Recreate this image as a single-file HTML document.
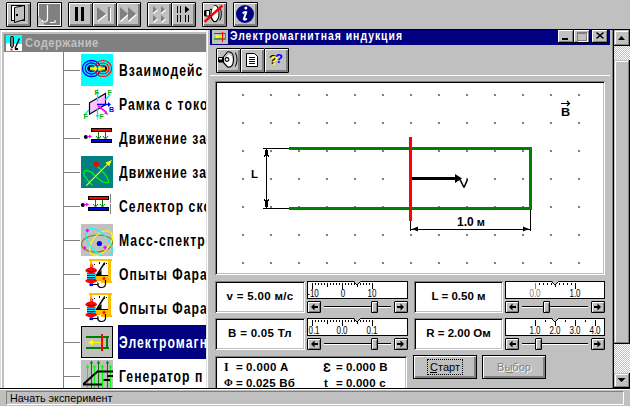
<!DOCTYPE html>
<html><head><meta charset="utf-8"><style>
html,body{margin:0;padding:0}
body{width:630px;height:406px;background:#c0c0c0;position:relative;overflow:hidden;font-family:"Liberation Sans",sans-serif}
.a{position:absolute}
svg{position:absolute;overflow:visible}
.tb{position:absolute;width:25px;height:25px;box-sizing:border-box;background:#c0c0c0;
 clip-path:polygon(1px 0,calc(100% - 1px) 0,100% 1px,100% calc(100% - 1px),calc(100% - 1px) 100%,1px 100%,0 calc(100% - 1px),0 1px);
 box-shadow:inset 1px 1px #000,inset -1px -1px #000,inset 2px 2px #fff,inset -3px -3px #808080}
.t{position:absolute;white-space:pre;line-height:1}
.sunk{position:absolute;background:#fff;box-shadow:inset 1px 1px #808080,inset -1px -1px #fff,inset 2px 2px #000,inset -2px -2px #c0c0c0}
.cb{position:absolute;width:16px;height:13px;box-sizing:border-box;background:#c0c0c0;
 box-shadow:inset -1px -1px #000,inset 1px 1px #fff,inset -2px -2px #808080}
.sb{position:absolute;box-sizing:border-box;background:#c0c0c0;
 box-shadow:inset -1px -1px #000,inset 1px 1px #c0c0c0,inset -2px -2px #808080,inset 2px 2px #fff}
.chk{background-color:#fff;background-image:linear-gradient(45deg,#c0c0c0 25%,transparent 25%,transparent 75%,#c0c0c0 75%),linear-gradient(45deg,#c0c0c0 25%,transparent 25%,transparent 75%,#c0c0c0 75%);background-size:2px 2px;background-position:0 0,1px 1px}
.sbt{position:absolute;height:12px;box-sizing:border-box;background:#c0c0c0;
 clip-path:polygon(1px 0,calc(100% - 1px) 0,100% 1px,100% calc(100% - 1px),calc(100% - 1px) 100%,1px 100%,0 calc(100% - 1px),0 1px);
 box-shadow:inset 1px 1px #000,inset -1px -1px #000,inset 2px 2px #fff,inset -2px -2px #808080}
.sl{font-size:10px;letter-spacing:0px}
</style></head><body>
<div class="tb" style="left:6px;top:2px;background:#c0c0c0"></div>
<div class="tb" style="left:37px;top:2px;background:#808080"></div>
<div class="tb" style="left:68px;top:2px;background:#c0c0c0"></div>
<div class="tb" style="left:92px;top:2px;background:#c0c0c0"></div>
<div class="tb" style="left:116px;top:2px;background:#c0c0c0"></div>
<div class="tb" style="left:147px;top:2px;background:#c0c0c0"></div>
<div class="tb" style="left:171px;top:2px;background:#c0c0c0"></div>
<div class="tb" style="left:202px;top:2px;background:#c0c0c0"></div>
<div class="tb" style="left:233px;top:2px;background:#c0c0c0"></div>
<div class="a" style="left:0px;top:29px;width:630px;height:1px;background:#000;"></div>
<div class="a" style="left:0px;top:30px;width:1px;height:358px;background:#dfdfdf;"></div>
<div class="a" style="left:1px;top:30px;width:205px;height:2px;background:#fff;"></div>
<div class="a" style="left:1px;top:30px;width:1px;height:358px;background:#fff;"></div>
<div class="a" style="left:4px;top:34px;width:202px;height:18px;background:#808080;"></div>
<div class="t" style="left:24.5px;top:36.5px;font-size:12.5px;font-weight:bold;color:#c0c0c0;letter-spacing:0.5px;transform:scaleX(0.9);transform-origin:0 0">Содержание</div>
<div class="a" style="left:4px;top:52px;width:202px;height:336px;background:#fff;"></div>
<div class="a" style="left:63px;top:52px;width:1px;height:336px;background:#808080;"></div>
<div class="a" style="left:4px;top:52px;width:202px;height:336px;overflow:hidden">
<div class="a" style="left:60px;top:18px;width:16px;height:1px;background:#808080"></div>
<div class="t" style="left:114.5px;top:10.5px;font-size:16px;font-weight:bold;letter-spacing:1.4px;transform:scaleX(0.76);transform-origin:0 0;color:#000">Взаимодейс</div>
<div class="a" style="left:60px;top:52px;width:16px;height:1px;background:#808080"></div>
<div class="t" style="left:114.5px;top:44.5px;font-size:16px;font-weight:bold;letter-spacing:1.4px;transform:scaleX(0.76);transform-origin:0 0;color:#000">Рамка с токо</div>
<div class="a" style="left:60px;top:86px;width:16px;height:1px;background:#808080"></div>
<div class="t" style="left:114.5px;top:78.5px;font-size:16px;font-weight:bold;letter-spacing:1.4px;transform:scaleX(0.76);transform-origin:0 0;color:#000">Движение за</div>
<div class="a" style="left:60px;top:120px;width:16px;height:1px;background:#808080"></div>
<div class="t" style="left:114.5px;top:112.5px;font-size:16px;font-weight:bold;letter-spacing:1.4px;transform:scaleX(0.76);transform-origin:0 0;color:#000">Движение за</div>
<div class="a" style="left:60px;top:154px;width:16px;height:1px;background:#808080"></div>
<div class="t" style="left:114.5px;top:146.5px;font-size:16px;font-weight:bold;letter-spacing:1.4px;transform:scaleX(0.76);transform-origin:0 0;color:#000">Селектор ско</div>
<div class="a" style="left:60px;top:188px;width:16px;height:1px;background:#808080"></div>
<div class="t" style="left:114.5px;top:180.5px;font-size:16px;font-weight:bold;letter-spacing:1.4px;transform:scaleX(0.76);transform-origin:0 0;color:#000">Масс-спектр</div>
<div class="a" style="left:60px;top:222px;width:16px;height:1px;background:#808080"></div>
<div class="t" style="left:114.5px;top:214.5px;font-size:16px;font-weight:bold;letter-spacing:1.4px;transform:scaleX(0.76);transform-origin:0 0;color:#000">Опыты Фара</div>
<div class="a" style="left:60px;top:256px;width:16px;height:1px;background:#808080"></div>
<div class="t" style="left:114.5px;top:248.5px;font-size:16px;font-weight:bold;letter-spacing:1.4px;transform:scaleX(0.76);transform-origin:0 0;color:#000">Опыты Фара</div>
<div class="a" style="left:60px;top:290px;width:16px;height:1px;background:#808080"></div>
<div class="a" style="left:114px;top:273px;width:100px;height:34px;background:#000080"></div>
<div class="t" style="left:114.5px;top:282.5px;font-size:16px;font-weight:bold;letter-spacing:1.4px;transform:scaleX(0.76);transform-origin:0 0;color:#fff">Электромагн</div>
<div class="a" style="left:60px;top:324px;width:16px;height:1px;background:#808080"></div>
<div class="t" style="left:114.5px;top:316.5px;font-size:16px;font-weight:bold;letter-spacing:1.4px;transform:scaleX(0.76);transform-origin:0 0;color:#000">Генератор п</div>
</div>
<svg width="32" height="32" style="left:81px;top:54px">
<rect width="32" height="32" fill="#00ffff"/>
<g fill="none" stroke-width="1.3">
<ellipse cx="10.5" cy="14.5" rx="9" ry="8" stroke="#0000ff"/><ellipse cx="10.5" cy="14.5" rx="6.3" ry="5.5" stroke="#0000ff"/><ellipse cx="10.5" cy="14.5" rx="3.7" ry="3.2" stroke="#0000ff"/>
<ellipse cx="22" cy="14.5" rx="8.5" ry="8" stroke="#ff0000" stroke-width="1.2"/><ellipse cx="22" cy="14.5" rx="6" ry="5.5" stroke="#ff0000" stroke-width="1.2"/><ellipse cx="22" cy="14.5" rx="3.5" ry="3.2" stroke="#ff0000" stroke-width="1.2"/>
</g>
<ellipse cx="9.5" cy="14.5" rx="3" ry="2.2" fill="#000"/><ellipse cx="23" cy="14.5" rx="3" ry="2.2" fill="#000"/>
<path d="M9 13.2h4.5v-2l3 3.3l-3 3.3v-2h-4.5z M24 13.2h-4.5v-2l-3 3.3l3 3.3v-2h4.5z" fill="#ffff00"/>
</svg>
<svg width="32" height="32" style="left:81px;top:88px">
<rect x="16" y="1" width="1" height="31" fill="#ffb0ff"/>
<path d="M8.5 14.8L24.5 5.5V16.6L8.5 26.3z" fill="#ffc0ff" stroke="#000" stroke-width="1.2"/>
<rect x="16" y="1" width="1" height="31" fill="#ffb0ff" opacity="0.6"/>
<path d="M16.5 13V4 M16.5 20V29 M24 12L29.5 6.5 M8 22L3 27" stroke="#00e0ff" stroke-width="1.3"/>
<path d="M14.5 6h4l-2 -3z M14.5 27h4l-2 3z" fill="#00e0ff"/>
<path d="M16 16.5H28" stroke="#0000ff" stroke-width="1.5"/><path d="M27 14l3 2.5l-3 2.5z" fill="#0000ff"/>
<path d="M17 18L25 24" stroke="#ff00ff" stroke-width="1.8"/><path d="M23 25.5l4 1.5l-1.5-4z" fill="#ff00ff"/>
<g font-family="Liberation Sans" font-weight="bold" font-size="7" fill="#00b000">
<text x="13.5" y="7">F</text><text x="26.5" y="7">F</text><text x="2.5" y="31">F</text><text x="18.5" y="31">F</text></g>
<text x="28" y="24" font-family="Liberation Sans" font-weight="bold" font-size="7" fill="#0000ff">B</text>
</svg>
<svg width="32" height="32" style="left:81px;top:122px" shape-rendering="crispEdges">
<rect x="10" y="6" width="21" height="4" fill="#000"/><rect x="11" y="7" width="19" height="2" fill="#ff0000"/>
<rect x="10" y="17" width="21" height="4" fill="#000"/><rect x="11" y="18" width="19" height="2" fill="#0000ff"/>
<rect x="17" y="10" width="1" height="6" fill="#008000"/><rect x="24" y="10" width="1" height="6" fill="#008000"/>
<path d="M15 14l2.5 3l2.5-3 M22 14l2.5 3l2.5-3" stroke="#008000" fill="none" shape-rendering="auto"/>
<circle cx="4.8" cy="15" r="2" fill="#000" shape-rendering="auto"/>
<rect x="6" y="14" width="4" height="1" fill="#ff00ff"/><path d="M8 12.5l3 2l-3 2z" fill="#ff00ff" shape-rendering="auto"/>
</svg>
<svg width="32" height="32" style="left:81px;top:156px;overflow:hidden">
<rect width="32" height="32" fill="#008080"/>
<path d="M17 10.7L24 18.3Q27.5 23 27.5 26.5Q25.5 27.5 21.6 25.8L15.8 21.6L11.6 17Q7 14 3.5 14.8Q2 17 3.2 19.5L7.4 25L11.6 29.6" fill="none" stroke="#00ff00" stroke-width="1.2"/>
<path d="M5.3 29.6L30.4 4.4" stroke="#ffff00" stroke-width="1.1"/><path d="M30.4 4.4l-6 2.2l3.8 3.8z" fill="#ffff00"/>
<circle cx="15.3" cy="8.2" r="2.6" fill="#ff0000"/>
</svg>
<svg width="32" height="32" style="left:78px;top:190px" shape-rendering="crispEdges">
<rect x="10" y="6" width="21" height="4" fill="#000"/><rect x="11" y="7" width="19" height="2" fill="#ff0000"/>
<rect x="10" y="17" width="21" height="4" fill="#000"/><rect x="11" y="18" width="19" height="2" fill="#0000ff"/>
<rect x="17" y="10" width="1" height="6" fill="#008000"/><rect x="24" y="10" width="1" height="6" fill="#008000"/>
<path d="M15 14l2.5 3l2.5-3 M22 14l2.5 3l2.5-3" stroke="#008000" fill="none" shape-rendering="auto"/>
<circle cx="4.8" cy="15" r="2" fill="#000" shape-rendering="auto"/>
<rect x="6" y="14" width="4" height="1" fill="#ff00ff"/><path d="M8 12.5l3 2l-3 2z" fill="#ff00ff" shape-rendering="auto"/>
<rect x="32" y="4" width="1" height="9" fill="#808080"/><rect x="32" y="14" width="1" height="10" fill="#808080"/></svg>
<svg width="32" height="32" style="left:81px;top:224px;overflow:hidden">
<rect width="32" height="32" fill="#c0c0c0"/>
<ellipse cx="16" cy="19.5" rx="15.5" ry="8.5" transform="rotate(-4 16 19.5)" fill="none" stroke="#808000" stroke-width="1.1"/>
<ellipse cx="20" cy="19" rx="14.5" ry="8.5" transform="rotate(-49 20 19)" fill="none" stroke="#ffff00" stroke-width="1.1"/>
<ellipse cx="18" cy="18.5" rx="17" ry="9" transform="rotate(48 18 18.5)" fill="none" stroke="#00ffff" stroke-width="1.1"/>
<circle cx="18.4" cy="19.5" r="2.6" fill="#0000ff"/>
<path d="M6.4 4.5l2 2l-2 2l-2-2z M3.5 22l2 2l-2 2l-2-2z M24 21.5l2 2l-2 2l-2-2z" fill="#ff00ff"/>
</svg>
<svg width="32" height="32" style="left:82px;top:256px">
<g shape-rendering="crispEdges">
<rect x="7" y="3" width="23" height="2" fill="#ffbf00"/>
<rect x="8" y="5" width="2" height="15" fill="#ffbf00"/>
<rect x="26" y="5" width="3" height="22" fill="#ffbf00"/>
<rect x="10" y="5" width="16" height="14" fill="#fff"/>
<rect x="12" y="20" width="14" height="5" fill="#ffbf00"/>
<rect x="19" y="25" width="11" height="2" fill="#ffbf00"/>
<rect x="14" y="19" width="12" height="1" fill="#000"/>
<rect x="12" y="8" width="1" height="1" fill="#000"/><rect x="17" y="6" width="1" height="2" fill="#000"/><rect x="22" y="8" width="1" height="1" fill="#000"/><rect x="24" y="7" width="1" height="1" fill="#000"/>
</g>
<path d="M14.5 19.5L22.8 6.5" stroke="#000" stroke-width="1.4"/>
<path d="M14 20L19.5 14V20z" fill="#000"/>
<rect x="8.4" y="8.4" width="2.8" height="3.5" rx="1" fill="#ff0000"/><rect x="9.3" y="9.3" width="1" height="1.5" fill="#fff"/>
<ellipse cx="9.2" cy="14.4" rx="5.8" ry="2.8" fill="#ff0000"/>
<path d="M6 15q3.2 2 6.4 0" stroke="#000" fill="none" stroke-width="0.9"/>
<rect x="5" y="17.2" width="8.4" height="7" fill="#0000ff"/>
<path d="M5 18.3h8.4 M5 20.5h8.4 M5 22.7h8.4" stroke="#00ffff" stroke-width="1.1"/>
<ellipse cx="9.2" cy="24.8" rx="5.8" ry="2.3" fill="#ff0000"/>
<rect x="7.5" y="27.3" width="3.5" height="2.8" fill="#0000ff"/>
<path d="M12 27.5h3.5" stroke="#fff" stroke-width="2"/>
<path d="M11 28.5h4.5q1 3 3.5 3q4.5 0 4.5-3.5v-4" stroke="#000" fill="none" stroke-width="1.2"/>
<path d="M15.5 26.5l1 2" stroke="#000" stroke-width="1.1"/>
<path d="M22 20.5l1.7 2l-1.7 2l-1.7-2z" fill="#ff0000"/>
</svg>
<svg width="32" height="32" style="left:82px;top:290px">
<g shape-rendering="crispEdges">
<rect x="7" y="3" width="23" height="2" fill="#ffbf00"/>
<rect x="8" y="5" width="2" height="15" fill="#ffbf00"/>
<rect x="26" y="5" width="3" height="22" fill="#ffbf00"/>
<rect x="10" y="5" width="16" height="14" fill="#fff"/>
<rect x="12" y="20" width="14" height="5" fill="#ffbf00"/>
<rect x="19" y="25" width="11" height="2" fill="#ffbf00"/>
<rect x="14" y="19" width="12" height="1" fill="#000"/>
<rect x="12" y="8" width="1" height="1" fill="#000"/><rect x="17" y="6" width="1" height="2" fill="#000"/><rect x="22" y="8" width="1" height="1" fill="#000"/><rect x="24" y="7" width="1" height="1" fill="#000"/>
</g>
<path d="M14.5 19.5L22.8 6.5" stroke="#000" stroke-width="1.4"/>
<path d="M14 20L19.5 14V20z" fill="#000"/>
<rect x="8.4" y="8.4" width="2.8" height="3.5" rx="1" fill="#ff0000"/><rect x="9.3" y="9.3" width="1" height="1.5" fill="#fff"/>
<ellipse cx="9.2" cy="14.4" rx="5.8" ry="2.8" fill="#ff0000"/>
<path d="M6 15q3.2 2 6.4 0" stroke="#000" fill="none" stroke-width="0.9"/>
<rect x="5" y="17.2" width="8.4" height="7" fill="#0000ff"/>
<path d="M5 18.3h8.4 M5 20.5h8.4 M5 22.7h8.4" stroke="#00ffff" stroke-width="1.1"/>
<ellipse cx="9.2" cy="24.8" rx="5.8" ry="2.3" fill="#ff0000"/>
<rect x="7.5" y="27.3" width="3.5" height="2.8" fill="#0000ff"/>
<path d="M12 27.5h3.5" stroke="#fff" stroke-width="2"/>
<path d="M11 28.5h4.5q1 3 3.5 3q4.5 0 4.5-3.5v-4" stroke="#000" fill="none" stroke-width="1.2"/>
<path d="M15.5 26.5l1 2" stroke="#000" stroke-width="1.1"/>
<path d="M22 20.5l1.7 2l-1.7 2l-1.7-2z" fill="#ff0000"/>
</svg>
<svg width="32" height="32" style="left:81px;top:326px" shape-rendering="crispEdges">
<rect width="32" height="32" fill="#000"/><rect x="1" y="1" width="30" height="30" fill="#c0c0c0"/>
<rect x="5" y="10" width="23" height="2" fill="#008000"/><rect x="5" y="21" width="23" height="2" fill="#008000"/>
<rect x="25" y="10" width="2" height="13" fill="#008000"/>
<rect x="20" y="8" width="2" height="17" fill="#ff0000"/>
<rect x="10" y="16" width="10" height="1" fill="#ffff00"/>
<path d="M7 16.5l5-3v6z" fill="#ffff00" shape-rendering="auto"/>
</svg>
<svg width="32" height="28" style="left:81px;top:360px"><rect width="32" height="28" fill="#c0c0c0"/><path d="M10.5 2V28" stroke="#008000" stroke-width="1.1"/><path d="M8.7 3.5l1.8-3l1.8 3z" fill="#008000"/><path d="M17.5 2V28" stroke="#008000" stroke-width="1.1"/><path d="M15.7 3.5l1.8-3l1.8 3z" fill="#008000"/><path d="M26.5 2V28" stroke="#008000" stroke-width="1.1"/><path d="M24.7 3.5l1.8-3l1.8 3z" fill="#008000"/><path d="M6.5 6V28" stroke="#00ff00" stroke-width="1.1"/><path d="M4.7 7.5l1.8-3l1.8 3z" fill="#00ff00"/><path d="M13.5 6V28" stroke="#00ff00" stroke-width="1.1"/><path d="M11.7 7.5l1.8-3l1.8 3z" fill="#00ff00"/><path d="M21.5 6V28" stroke="#00ff00" stroke-width="1.1"/><path d="M19.7 7.5l1.8-3l1.8 3z" fill="#00ff00"/><path d="M29.5 6V28" stroke="#00ff00" stroke-width="1.1"/><path d="M27.7 7.5l1.8-3l1.8 3z" fill="#00ff00"/><path d="M2 24.5H21 M2.5 24L16.5 11.5H32 M22.5 20H29 M26.5 16H32" stroke="#000" stroke-width="1.8" fill="none"/></svg>
<div class="a" style="left:206px;top:30px;width:1px;height:358px;background:#dfdfdf;"></div>
<div class="a" style="left:207px;top:30px;width:1px;height:358px;background:#fff;"></div>
<div class="a" style="left:208px;top:30px;width:402px;height:358px;background:#c0c0c0;"></div>
<div class="a" style="left:612px;top:30px;width:1px;height:358px;background:#808080;"></div>
<div class="a" style="left:613px;top:30px;width:1px;height:358px;background:#000;"></div>
<div class="a" style="left:210px;top:30px;width:400px;height:15px;background:#000080;"></div>
<div class="t" style="left:229.5px;top:28.5px;font-size:13px;font-weight:bold;color:#fff;letter-spacing:1.25px;transform:scaleX(0.8);transform-origin:0 0">Электромагнитная индукция</div>
<div class="cb" style="left:558px;top:30px"></div>
<div class="cb" style="left:574px;top:30px"></div>
<div class="cb" style="left:592px;top:30px"></div>
<div class="tb" style="left:216px;top:48px;background:#c0c0c0"></div>
<div class="tb" style="left:240px;top:48px;background:#c0c0c0"></div>
<div class="tb" style="left:264px;top:48px;background:#c0c0c0"></div>
<div class="a" style="left:210px;top:75px;width:400px;height:1px;background:#fff;"></div>
<div class="sunk" style="left:215px;top:81px;width:390px;height:194px"></div>
<svg width="630" height="406" style="left:0;top:0" shape-rendering="crispEdges">
<path d="M242 94h2v2h-2zM242 122h2v2h-2zM242 150h2v2h-2zM242 178h2v2h-2zM242 206h2v2h-2zM242 234h2v2h-2zM242 262h2v2h-2zM270 94h2v2h-2zM270 122h2v2h-2zM270 150h2v2h-2zM270 178h2v2h-2zM270 206h2v2h-2zM270 234h2v2h-2zM270 262h2v2h-2zM298 94h2v2h-2zM298 122h2v2h-2zM298 150h2v2h-2zM298 178h2v2h-2zM298 206h2v2h-2zM298 234h2v2h-2zM298 262h2v2h-2zM326 94h2v2h-2zM326 122h2v2h-2zM326 150h2v2h-2zM326 178h2v2h-2zM326 206h2v2h-2zM326 234h2v2h-2zM326 262h2v2h-2zM354 94h2v2h-2zM354 122h2v2h-2zM354 150h2v2h-2zM354 178h2v2h-2zM354 206h2v2h-2zM354 234h2v2h-2zM354 262h2v2h-2zM382 94h2v2h-2zM382 122h2v2h-2zM382 150h2v2h-2zM382 178h2v2h-2zM382 206h2v2h-2zM382 234h2v2h-2zM382 262h2v2h-2zM410 94h2v2h-2zM410 122h2v2h-2zM410 150h2v2h-2zM410 178h2v2h-2zM410 206h2v2h-2zM410 234h2v2h-2zM410 262h2v2h-2zM438 94h2v2h-2zM438 122h2v2h-2zM438 150h2v2h-2zM438 178h2v2h-2zM438 206h2v2h-2zM438 234h2v2h-2zM438 262h2v2h-2zM466 94h2v2h-2zM466 122h2v2h-2zM466 150h2v2h-2zM466 178h2v2h-2zM466 206h2v2h-2zM466 234h2v2h-2zM466 262h2v2h-2zM494 94h2v2h-2zM494 122h2v2h-2zM494 150h2v2h-2zM494 178h2v2h-2zM494 206h2v2h-2zM494 234h2v2h-2zM494 262h2v2h-2zM522 94h2v2h-2zM522 122h2v2h-2zM522 150h2v2h-2zM522 178h2v2h-2zM522 206h2v2h-2zM522 234h2v2h-2zM522 262h2v2h-2zM550 94h2v2h-2zM550 122h2v2h-2zM550 150h2v2h-2zM550 178h2v2h-2zM550 206h2v2h-2zM550 234h2v2h-2zM550 262h2v2h-2zM578 94h2v2h-2zM578 122h2v2h-2zM578 150h2v2h-2zM578 178h2v2h-2zM578 206h2v2h-2zM578 234h2v2h-2zM578 262h2v2h-2z" fill="#808080"/>
<rect x="263" y="148" width="26" height="1" fill="#000"/>
<rect x="263" y="208" width="26" height="1" fill="#000"/>
<rect x="289" y="147" width="243" height="3" fill="#008000"/>
<rect x="289" y="207" width="243" height="3" fill="#008000"/>
<rect x="529" y="147" width="3" height="63" fill="#008000"/>
<rect x="266" y="149" width="1" height="59" fill="#000"/>
<path d="M265 150h3v6h-3z M264 155h1v2h-1z M268 155h1v2h-1z M265 200h3v7h-3z M264 199h1v2h-1z M268 199h1v2h-1z" fill="#000"/>
<rect x="409" y="137" width="3" height="84" fill="#ff0000"/>
<rect x="412" y="177" width="44" height="3" fill="#000"/>
<path d="M455 174l7 4.5l-7 4.5z" fill="#000" shape-rendering="auto"/>
<path d="M460 179.5l4 8 M464 187.5l3.5-8" stroke="#000" stroke-width="1.6" fill="none" shape-rendering="auto"/>
<rect x="410" y="221" width="1" height="10" fill="#000"/>
<rect x="530" y="210" width="1" height="21" fill="#000"/>
<rect x="411" y="229" width="119" height="1" fill="#000"/>
<path d="M412 229l6-2.5v5z M529 229l-6-2.5v5z" fill="#000" shape-rendering="auto"/>
<rect x="561" y="103" width="9" height="1" fill="#000"/>
<path d="M567 101l2.5 2.5l-2.5 2.5" stroke="#000" stroke-width="1.2" fill="none" shape-rendering="auto"/>
</svg>
<div class="t" style="left:251px;top:169px;font-size:11.5px;font-weight:bold;color:#000;">L</div>
<div class="t" style="left:561px;top:107px;font-size:11px;font-weight:bold;color:#000;transform:scaleX(1.15);transform-origin:0 0">B</div>
<div class="t" style="left:457px;top:216px;font-size:12px;font-weight:bold;color:#000;">1.0<span style="font-size:11px"> м</span></div>
<div class="sunk" style="left:215px;top:281px;width:90px;height:32px"></div>
<div class="sunk" style="left:215px;top:318px;width:90px;height:32px"></div>
<div class="sunk" style="left:414px;top:281px;width:89px;height:32px"></div>
<div class="sunk" style="left:414px;top:318px;width:89px;height:32px"></div>
<div class="sunk" style="left:215px;top:356px;width:192px;height:40px"></div>
<div class="a" style="left:307px;top:281px;width:101px;height:18px;box-sizing:border-box;border:1px solid #000;background:#fff"></div>
<svg width="630" height="406" style="left:0;top:0" shape-rendering="crispEdges"><path d="M312 283h1v6h-1zM315 283h1v2h-1zM318 283h1v2h-1zM321 283h1v2h-1zM324 283h1v2h-1zM327 283h1v4h-1zM330 283h1v2h-1zM333 283h1v2h-1zM336 283h1v2h-1zM339 283h1v2h-1zM342 283h1v6h-1zM345 283h1v2h-1zM348 283h1v2h-1zM351 283h1v2h-1zM354 283h1v2h-1zM357 283h1v4h-1zM360 283h1v2h-1zM363 283h1v2h-1zM366 283h1v2h-1zM369 283h1v2h-1zM372 283h1v6h-1z" fill="#000"/><path d="M354 281h7l-3.5 3.5z" fill="#c0c0c0" shape-rendering="auto"/><path d="M353.5 281.5l3.5 3.5l3.5-3.5" stroke="#000" stroke-width="1" fill="none" shape-rendering="auto"/><rect x="357" y="284" width="1" height="3" fill="#000"/><rect x="324" y="306" width="67" height="1" fill="#000"/><rect x="324" y="307" width="67" height="1" fill="#fff"/></svg>
<div class="t sl" style="left:313px;top:288.8px;color:#000;transform:translateX(-50%) scaleX(0.8)">-10</div>
<div class="t sl" style="left:343px;top:288.8px;color:#000;transform:translateX(-50%) scaleX(0.8)">0</div>
<div class="t sl" style="left:372px;top:288.8px;color:#000;transform:translateX(-50%) scaleX(0.8)">10</div>
<div class="sbt" style="left:307px;top:301px;width:14px"></div>
<div class="sbt" style="left:394px;top:301px;width:14px"></div>
<div class="sbt" style="left:371px;top:301px;width:7px"></div>
<svg width="630" height="406" style="left:0;top:0"><path d="M311 307l3.5-3.5v2.5h3.5v2h-3.5v2.5z" fill="#000"/><path d="M404 307l-3.5-3.5v2.5h-3.5v2h3.5v2.5z" fill="#000"/></svg>
<div class="a" style="left:307px;top:318px;width:101px;height:18px;box-sizing:border-box;border:1px solid #000;background:#fff"></div>
<svg width="630" height="406" style="left:0;top:0" shape-rendering="crispEdges"><path d="M312 320h1v6h-1zM315 320h1v2h-1zM318 320h1v2h-1zM321 320h1v2h-1zM324 320h1v2h-1zM327 320h1v4h-1zM330 320h1v2h-1zM333 320h1v2h-1zM336 320h1v2h-1zM339 320h1v2h-1zM342 320h1v6h-1zM345 320h1v2h-1zM348 320h1v2h-1zM351 320h1v2h-1zM354 320h1v2h-1zM357 320h1v4h-1zM360 320h1v2h-1zM363 320h1v2h-1zM366 320h1v2h-1zM369 320h1v2h-1zM372 320h1v6h-1z" fill="#000"/><path d="M354 318h7l-3.5 3.5z" fill="#c0c0c0" shape-rendering="auto"/><path d="M353.5 318.5l3.5 3.5l3.5-3.5" stroke="#000" stroke-width="1" fill="none" shape-rendering="auto"/><rect x="357" y="321" width="1" height="3" fill="#000"/><rect x="324" y="343" width="67" height="1" fill="#000"/><rect x="324" y="344" width="67" height="1" fill="#fff"/></svg>
<div class="t sl" style="left:314px;top:325.8px;color:#000;transform:translateX(-50%) scaleX(0.8)">0.1</div>
<div class="t sl" style="left:342px;top:325.8px;color:#000;transform:translateX(-50%) scaleX(0.8)">0.0</div>
<div class="t sl" style="left:372px;top:325.8px;color:#000;transform:translateX(-50%) scaleX(0.8)">0.1</div>
<div class="sbt" style="left:307px;top:338px;width:14px"></div>
<div class="sbt" style="left:394px;top:338px;width:14px"></div>
<div class="sbt" style="left:371px;top:338px;width:7px"></div>
<svg width="630" height="406" style="left:0;top:0"><path d="M311 344l3.5-3.5v2.5h3.5v2h-3.5v2.5z" fill="#000"/><path d="M404 344l-3.5-3.5v2.5h-3.5v2h3.5v2.5z" fill="#000"/></svg>
<div class="a" style="left:505px;top:281px;width:100px;height:18px;box-sizing:border-box;border:1px solid #000;background:#fff"></div>
<svg width="630" height="406" style="left:0;top:0" shape-rendering="crispEdges"><path d="M539 283h1v2h-1zM543 283h1v2h-1zM547 283h1v2h-1zM551 283h1v2h-1zM555 283h1v4h-1zM559 283h1v2h-1zM563 283h1v2h-1zM567 283h1v2h-1zM571 283h1v2h-1zM575 283h1v6h-1z" fill="#000"/><path d="M535 283h1v6h-1z" fill="#808080"/><path d="M552 281h7l-3.5 3.5z" fill="#c0c0c0" shape-rendering="auto"/><path d="M551.5 281.5l3.5 3.5l3.5-3.5" stroke="#000" stroke-width="1" fill="none" shape-rendering="auto"/><rect x="555" y="284" width="1" height="3" fill="#000"/><rect x="522" y="306" width="66" height="1" fill="#000"/><rect x="522" y="307" width="66" height="1" fill="#fff"/></svg>
<div class="t sl" style="left:535px;top:288.8px;color:#808080;transform:translateX(-50%) scaleX(0.8)">0.0</div>
<div class="t sl" style="left:575px;top:288.8px;color:#000;transform:translateX(-50%) scaleX(0.8)">1.0</div>
<div class="sbt" style="left:505px;top:301px;width:14px"></div>
<div class="sbt" style="left:591px;top:301px;width:14px"></div>
<div class="sbt" style="left:543px;top:301px;width:7px"></div>
<svg width="630" height="406" style="left:0;top:0"><path d="M509 307l3.5-3.5v2.5h3.5v2h-3.5v2.5z" fill="#000"/><path d="M601 307l-3.5-3.5v2.5h-3.5v2h3.5v2.5z" fill="#000"/></svg>
<div class="a" style="left:505px;top:318px;width:100px;height:18px;box-sizing:border-box;border:1px solid #000;background:#fff"></div>
<svg width="630" height="406" style="left:0;top:0" shape-rendering="crispEdges"><path d="M535 320h1v6h-1zM545 320h1v2h-1zM555 320h1v6h-1zM565 320h1v2h-1zM575 320h1v6h-1zM585 320h1v2h-1zM595 320h1v6h-1z" fill="#000"/><path d="M552 318h7l-3.5 3.5z" fill="#c0c0c0" shape-rendering="auto"/><path d="M551.5 318.5l3.5 3.5l3.5-3.5" stroke="#000" stroke-width="1" fill="none" shape-rendering="auto"/><rect x="555" y="321" width="1" height="3" fill="#000"/><rect x="522" y="343" width="66" height="1" fill="#000"/><rect x="522" y="344" width="66" height="1" fill="#fff"/></svg>
<div class="t sl" style="left:535px;top:325.8px;color:#000;transform:translateX(-50%) scaleX(0.8)">1.0</div>
<div class="t sl" style="left:555px;top:325.8px;color:#000;transform:translateX(-50%) scaleX(0.8)">2.0</div>
<div class="t sl" style="left:575px;top:325.8px;color:#000;transform:translateX(-50%) scaleX(0.8)">3.0</div>
<div class="t sl" style="left:595px;top:325.8px;color:#000;transform:translateX(-50%) scaleX(0.8)">4.0</div>
<div class="sbt" style="left:505px;top:338px;width:14px"></div>
<div class="sbt" style="left:591px;top:338px;width:14px"></div>
<div class="sbt" style="left:535px;top:338px;width:7px"></div>
<svg width="630" height="406" style="left:0;top:0"><path d="M509 344l3.5-3.5v2.5h3.5v2h-3.5v2.5z" fill="#000"/><path d="M601 344l-3.5-3.5v2.5h-3.5v2h3.5v2.5z" fill="#000"/></svg>
<div class="t" style="left:215px;top:291px;width:90px;text-align:center;font-size:11.5px;font-weight:bold;letter-spacing:0.3px">v = 5.00 м/с</div>
<div class="t" style="left:215px;top:328px;width:90px;text-align:center;font-size:11.5px;font-weight:bold;letter-spacing:0.3px">B = 0.05 Тл</div>
<div class="t" style="left:414px;top:291px;width:89px;text-align:center;font-size:11.5px;font-weight:bold;letter-spacing:0px">L = 0.50 м</div>
<div class="t" style="left:414px;top:328px;width:89px;text-align:center;font-size:11.5px;font-weight:bold;letter-spacing:0px">R = 2.00 Ом</div>
<div class="a" style="left:217px;top:358px;width:188px;height:30px;overflow:hidden">
<div class="t" style="left:7px;top:3px;font-family:'Liberation Serif',sans-serif;font-size:12px;font-weight:bold;letter-spacing:0px">I</div>
<div class="t" style="left:19px;top:4px;font-family:'Liberation Sans',sans-serif;font-size:11.5px;font-weight:bold;letter-spacing:0px">=</div>
<div class="t" style="left:29px;top:4px;font-family:'Liberation Sans',sans-serif;font-size:11.5px;font-weight:bold;letter-spacing:0.4px">0.000 A</div>
<div class="t" style="left:7px;top:20px;font-family:'Liberation Serif',sans-serif;font-size:10.5px;font-weight:bold;letter-spacing:0px">Φ</div>
<div class="t" style="left:19px;top:20px;font-family:'Liberation Sans',sans-serif;font-size:11.5px;font-weight:bold;letter-spacing:0px">=</div>
<div class="t" style="left:29px;top:20px;font-family:'Liberation Sans',sans-serif;font-size:11.5px;font-weight:bold;letter-spacing:0.2px">0.025 Вб</div>
<div class="t" style="left:106px;top:4px;font-family:'Liberation Sans',sans-serif;font-size:12.5px;font-weight:bold;letter-spacing:0px">Ɛ</div>
<div class="t" style="left:119px;top:4px;font-family:'Liberation Sans',sans-serif;font-size:11.5px;font-weight:bold;letter-spacing:0px">=</div>
<div class="t" style="left:129px;top:4px;font-family:'Liberation Sans',sans-serif;font-size:11.5px;font-weight:bold;letter-spacing:0.2px">0.000 B</div>
<div class="t" style="left:107px;top:20px;font-family:'Liberation Sans',sans-serif;font-size:11.5px;font-weight:bold;letter-spacing:0px">t</div>
<div class="t" style="left:119px;top:20px;font-family:'Liberation Sans',sans-serif;font-size:11.5px;font-weight:bold;letter-spacing:0px">=</div>
<div class="t" style="left:129px;top:20px;font-family:'Liberation Sans',sans-serif;font-size:11.5px;font-weight:bold;letter-spacing:0.2px">0.000 c</div>
</div>
<div class="a" style="left:413px;top:355px;width:64px;height:24px;box-sizing:border-box;border:1px solid #000;background:#c0c0c0;box-shadow:inset 1px 1px #fff,inset -2px -2px #808080"></div>
<div class="a" style="left:427px;top:359px;width:36px;height:16px;box-sizing:border-box;border:1px dotted #000"></div>
<div class="t" style="left:413px;top:362px;width:64px;text-align:center;font-size:11px">Старт</div>
<div class="a" style="left:430px;top:372px;width:7px;height:1px;background:#000;"></div>
<div class="a" style="left:482px;top:355px;width:64px;height:24px;box-sizing:border-box;border:1px solid #000;background:#c0c0c0;box-shadow:inset 1px 1px #fff,inset -2px -2px #808080"></div>
<div class="t" style="left:483px;top:363px;width:64px;text-align:center;font-size:11px;color:#fff">Выбор</div>
<div class="t" style="left:482px;top:362px;width:64px;text-align:center;font-size:11px;color:#808080">Выбор</div>
<div class="a" style="left:506px;top:372px;width:7px;height:1px;background:#808080;"></div>
<div class="sb" style="left:614px;top:30px;width:16px;height:16px"></div>
<div class="a chk" style="left:614px;top:46px;width:16px;height:14px"></div>
<div class="sb" style="left:614px;top:60px;width:16px;height:284px"></div>
<div class="a chk" style="left:614px;top:344px;width:16px;height:29px"></div>
<div class="sb" style="left:614px;top:373px;width:16px;height:15px"></div>
<div class="a" style="left:0px;top:388px;width:630px;height:18px;background:#c0c0c0;"></div>
<div class="a" style="left:0px;top:388px;width:630px;height:1px;background:#000;"></div>
<div class="a" style="left:0px;top:389px;width:630px;height:1px;background:#fff;"></div>
<div class="a" style="left:6px;top:391px;width:618px;height:14px;background:transparent;box-sizing:border-box;border-top:1px solid #808080;border-left:1px solid #808080;border-right:1px solid #fff;border-bottom:1px solid #fff"></div>
<div class="t" style="left:10px;top:393px;font-size:10.8px;font-weight:normal;color:#000;">Начать эксперимент</div>
<div class="a" style="left:38px;top:3px;width:23px;height:23px;box-sizing:border-box;border:1px solid #fff;background:#808080"></div>
<svg width="630" height="406" style="left:0;top:0"><g shape-rendering="crispEdges"><rect x="11" y="5" width="14" height="16" fill="#000"/><rect x="12" y="6" width="12" height="14" fill="#fff"/></g><path d="M14.5 7.5L24.5 5.5V19.5L14.5 22.5z" fill="#c0c0c0" stroke="#000" stroke-width="1"/><rect x="16" y="14" width="2" height="2" fill="#000"/><path d="M38 15L45 25H38z" fill="#c0c0c0"/><path d="M47.5 5V19q0 3-3 3q-2 0-2.5-2 M50 22.5h4 M55 20v3" stroke="#fff" stroke-width="1.2" fill="none"/><g shape-rendering="crispEdges"><rect x="75" y="7" width="3" height="14" fill="#000"/><rect x="81" y="7" width="3" height="14" fill="#000"/></g><path d="M97 7L106 14L97 21z" fill="#808080"/><path d="M97.5 21.5L106.5 14.5" stroke="#fff" stroke-width="1.2"/><g shape-rendering="crispEdges"><rect x="108" y="7" width="2" height="14" fill="#808080"/><rect x="110" y="8" width="1" height="14" fill="#fff"/></g><path d="M120 7L128 14L120 21z" fill="#808080"/><path d="M120.5 21.5L128.5 14.5" stroke="#fff" stroke-width="1.2"/><path d="M128 7L136 14L128 21z" fill="#808080"/><path d="M128.5 21.5L136.5 14.5" stroke="#fff" stroke-width="1.2"/><path d="M153 6L157 9.5L153 13z" fill="#808080"/><path d="M153.5 13.5L157.5 10" stroke="#fff" stroke-width="1.2"/><path d="M153 15L157 18.5L153 22z" fill="#808080"/><path d="M153.5 22.5L157.5 19" stroke="#fff" stroke-width="1.2"/><path d="M161 6L165 9.5L161 13z" fill="#808080"/><path d="M161.5 13.5L165.5 10" stroke="#fff" stroke-width="1.2"/><path d="M161 15L165 18.5L161 22z" fill="#808080"/><path d="M161.5 22.5L165.5 19" stroke="#fff" stroke-width="1.2"/><g shape-rendering="crispEdges" fill="#000"><rect x="177" y="6" width="1" height="7"/><rect x="180" y="6" width="1" height="7"/><rect x="177" y="15" width="1" height="7"/><rect x="180" y="15" width="1" height="7"/><rect x="185" y="15" width="1" height="7"/><rect x="188" y="15" width="1" height="7"/></g><path d="M185 6L189.5 9.5L185 13z" fill="#000"/><path d="M209.5 10.5L213.5 5.5H215V21.5H213.5L209.5 16z" fill="#c0c0c0" stroke="#000" stroke-width="1"/><ellipse cx="215" cy="13.5" rx="4" ry="8.2" fill="#fff" stroke="#000" stroke-width="1.1"/><path d="M211.5 9Q212 6 214.5 6" stroke="#c0c0c0" stroke-width="2" fill="none"/><path d="M205.5 10.5h4v5.5h-4q-1 0-1-1v-3.5q0-1 1-1z" fill="#fff" stroke="#000" stroke-width="1"/><rect x="204.5" y="10.5" width="2" height="5.5" fill="#000"/><path d="M219.8 7.5Q223 13.5 219.8 20.5" stroke="#000" stroke-width="1" fill="none"/><path d="M204.5 21.8L222.4 5.5" stroke="#ff0000" stroke-width="2.4"/><circle cx="245" cy="14" r="9" fill="#000080"/><circle cx="245.8" cy="8" r="1.5" fill="#fff"/><path d="M242.8 13.5Q244.5 11.5 246.2 12.2L243.8 19Q244.3 20.5 246.8 18.5" stroke="#fff" stroke-width="2" fill="none"/><g shape-rendering="crispEdges"><rect x="6" y="35" width="16" height="16" fill="#00ffff"/><rect x="6" y="44" width="16" height="7" fill="#fff"/></g><path d="M6 44l2-1.5l2 1l2-1l2 2l3-1l3 1l2-1V45H6z" fill="#fff"/><path d="M10.5 46V38.5Q10.5 36.2 12 36.2Q13.5 36.2 13.5 38.5V46L12 48z" fill="#808080" stroke="#000" stroke-width="0.9"/><path d="M19.5 38.5L15 48.5" stroke="#000" stroke-width="1.4"/><rect x="15" y="48" width="3" height="2" fill="#000"/><rect x="10.5" y="48.5" width="2" height="2" fill="#ff0000"/><g shape-rendering="crispEdges"><rect x="212" y="30" width="16" height="14" fill="#c0c0c0"/><rect x="214" y="33" width="12" height="1" fill="#008000"/><rect x="214" y="38" width="12" height="2" fill="#40a040"/><rect x="225" y="33" width="1" height="7" fill="#40a040"/><rect x="222" y="32" width="1" height="10" fill="#ff0000"/><rect x="216" y="36" width="6" height="1" fill="#ffff00"/><rect x="216" y="35" width="2" height="3" fill="#ffff00"/></g><path d="M223.5 57L227.5 52Q233.5 51 233.5 59.5Q233.5 68 227.5 67L223.5 62.5z" fill="#fff" stroke="#000" stroke-width="1.2"/><path d="M225 57.5L228 53.5Q231 53 232 56" stroke="#c0c0c0" stroke-width="1.5" fill="none"/><path d="M219.5 57h4v5.5h-4q-1.5 0-1.5-1v-3.5q0-1 1.5-1z" fill="#000"/><rect x="219" y="58" width="3" height="1.5" fill="#fff"/><circle cx="227" cy="59.5" r="1.9" fill="none" stroke="#000" stroke-width="1.1"/><path d="M235.3 52.5Q238.8 59.5 235.3 66.5" stroke="#000" stroke-width="1" fill="none"/><path d="M246.5 53.5h8l3 3v10h-11z" fill="#fff" stroke="#000" stroke-width="1"/><g shape-rendering="crispEdges" fill="#000080"><rect x="249" y="57" width="6" height="1"/><rect x="249" y="59" width="6" height="1"/><rect x="249" y="61" width="6" height="1"/><rect x="249" y="63" width="6" height="1"/></g><text x="269" y="64" font-family="Liberation Sans" font-weight="bold" font-size="13" fill="#000">?</text><text x="270" y="65" font-family="Liberation Sans" font-weight="bold" font-size="13" fill="#ffff00">?</text><text x="275" y="63" font-family="Liberation Sans" font-weight="bold" font-size="13" fill="#0000ff">?</text><g shape-rendering="crispEdges"><rect x="562" y="38" width="6" height="2" fill="#000"/><rect x="577" y="32" width="9" height="8" fill="none" stroke="#808080" stroke-width="1" transform="translate(0.5 0.5)"/><rect x="578" y="33" width="8" height="1" fill="#808080"/><rect x="578" y="41" width="9" height="1" fill="#fff"/><rect x="587" y="33" width="1" height="9" fill="#fff"/></g><path d="M596.5 32.5L603.5 38.5M603.5 32.5L596.5 38.5" stroke="#000" stroke-width="1.6"/><path d="M618 40h7l-3.5-4z" fill="#000"/><path d="M617.5 378h8l-4 4z" fill="#000"/></svg>
</body></html>
